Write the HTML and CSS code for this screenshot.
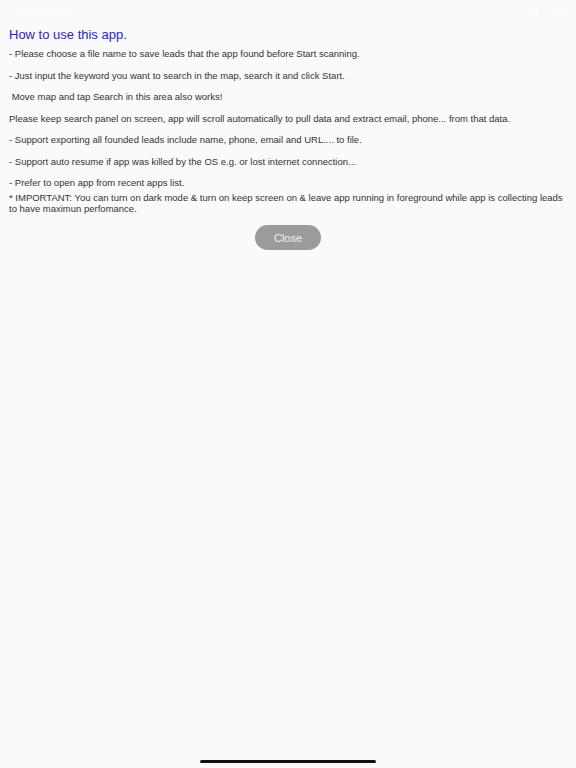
FILE: index.html
```html
<!DOCTYPE html>
<html lang="en">
<head>
    <meta charset="UTF-8">
    <meta name="viewport" content="width=device-width, initial-scale=1.0">
    <title>How to use this app</title>
    <link rel="stylesheet" href="styles.css">
</head>
<body>
    <div class="status-bar">
        <span class="status-left"></span>
        <span class="status-right">
            <span class="status-box"></span>
            <span class="status-box wide"></span>
        </span>
    </div>

    <div class="container">
        <header>How to use this app.</header>

        <p>- Please choose a file name to save leads that the app found before Start scanning.</p>
        <p>- Just input the keyword you want to search in the map, search it and click Start.</p>
        <p>&nbsp;Move map and tap Search in this area also works!</p>
        <p>Please keep search panel on screen, app will scroll automatically to pull data and extract email, phone... from that data.</p>
        <p>- Support exporting all founded leads include name, phone, email and URL.... to file.</p>
        <p>- Support auto resume if app was killed by the OS e.g. or lost internet connection...</p>
        <p class="tight">- Prefer to open app from recent apps list.</p>
        <p class="important">* IMPORTANT: You can turn on dark mode &amp; turn on keep screen on &amp; leave app running in foreground while app is collecting leads to have maximun perfomance.</p>

        <div class="actions">
            <button class="close-btn">Close</button>
        </div>
    </div>

    <div class="home-indicator"></div>
</body>
</html>
```

FILE: styles.css
```css
* {
    margin: 0;
    padding: 0;
    box-sizing: border-box;
    font-family: 'Liberation Sans', Arial, sans-serif;
}

html, body {
    height: 100%;
}

body {
    background: #fafafa;
    position: relative;
    overflow: hidden;
}

.status-bar {
    height: 22px;
    display: flex;
    justify-content: space-between;
    align-items: center;
    padding: 0 10px 0 15px;
}

.status-left {
    width: 57px;
    height: 8px;
    background: #fcfcfc;
}

.status-right {
    display: flex;
    gap: 14px;
}

.status-box {
    width: 10px;
    height: 6px;
    background: #fcfcfc;
}

.status-box.wide {
    width: 14px;
}

.container {
    padding: 4px 9px 0;
}

.container header {
    font-size: 13px;
    line-height: 17px;
    color: #2b1fc7;
    margin-bottom: 5px;
}

.container p {
    font-size: 9.5px;
    line-height: 12px;
    color: #333;
    margin-bottom: 9.5px;
}

.container p.tight {
    margin-bottom: 3px;
}

.container p.important {
    line-height: 11px;
    margin-bottom: 0;
}

.actions {
    display: flex;
    justify-content: center;
    padding-top: 11px;
}

.close-btn {
    width: 66px;
    height: 25px;
    border: none;
    border-radius: 13px;
    background: #9b9b9b;
    color: #f2f2f2;
    font-size: 11px;
}

.home-indicator {
    position: absolute;
    left: 200px;
    bottom: 5px;
    width: 176px;
    height: 3px;
    border-radius: 2px;
    background: #111;
}
```
